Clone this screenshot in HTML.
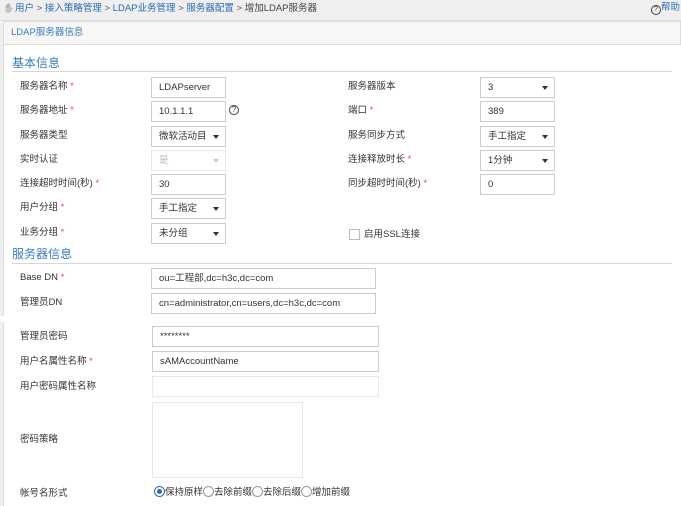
<!DOCTYPE html>
<html><head><meta charset="utf-8"><style>
*{margin:0;padding:0;box-sizing:border-box}
body{width:681px;height:506px;overflow:hidden;background:#fff;font-family:"Liberation Sans","Noto Sans CJK SC",sans-serif;font-size:9.5px;color:#333;position:relative}
.a{position:absolute;white-space:nowrap}
.bc{left:0;top:0;width:681px;height:21px;background:#efefef;border-bottom:1px solid #ddd}
.lb{line-height:14px}
.r{color:#e05050}
.in{position:absolute;height:21px;border:1px solid #ccc;background:#fff;padding-left:7px;line-height:19px;font-size:9.5px;color:#333;overflow:hidden}
.sel{padding-right:12px}
.sel:after{content:"";position:absolute;right:6px;top:8px;border-left:3.5px solid transparent;border-right:3.5px solid transparent;border-top:4px solid #333}
.dis{border-color:#e6e6e6;color:#bbb}
.dis:after{border-top-color:#ccc}
.sec{color:#3a7cc0;font-size:12px;line-height:14px}
.ln{height:1px;background:#d6d6d6}
.rad{display:inline-block;width:11px;height:11px;border:1px solid #999;border-radius:50%;vertical-align:-2px;background:#fff;margin:0}
</style></head><body>
<div class="a bc"></div>
<div class="a" style="left:3px;top:3px;font-size:9px;color:#666;filter:grayscale(1)">✋</div>
<div class="a lb" style="left:15px;top:2px;color:#2a6bb3">用户 <span style="color:#555">&gt;</span> 接入策略管理 <span style="color:#555">&gt;</span> LDAP业务管理 <span style="color:#555">&gt;</span> 服务器配置 <span style="color:#555">&gt;</span> <span style="color:#444">增加LDAP服务器</span></div>
<div class="a lb" style="left:651px;top:1px;color:#2a6bb3"><span style="display:inline-block;width:10px;height:10px;border:1px solid #444;border-radius:50%;font-size:7px;line-height:8px;text-align:center;color:#444;vertical-align:-1px">?</span>帮助</div>
<div class="a" style="left:0;top:22px;width:3px;height:294px;background:#efefef"></div>
<div class="a" style="left:0;top:322px;width:3px;height:184px;background:#efefef"></div>
<div class="a" style="left:3px;top:21px;width:678px;height:24px;background:#f7f7f7;border:1px solid #ddd"></div>
<div class="a" style="left:3px;top:45px;width:1px;height:271px;background:#ddd"></div>
<div class="a" style="left:3px;top:322px;width:1px;height:184px;background:#ddd"></div>
<div class="a lb" style="left:11px;top:26px;color:#3a7cc0;font-size:9.5px">LDAP服务器信息</div>

<div class="a sec" style="left:12px;top:56px">基本信息</div>
<div class="a ln" style="left:12px;top:71px;width:660px"></div>

<div class="a lb" style="left:20px;top:80px">服务器名称 <span class="r">*</span></div>
<div class="in" style="left:151px;top:77px;width:75px">LDAPserver</div>
<div class="a lb" style="left:20px;top:104px">服务器地址 <span class="r">*</span></div>
<div class="in" style="left:151px;top:101px;width:75px">10.1.1.1</div>
<div class="a" style="left:229px;top:105px;width:10px;height:10px;border:1px solid #444;border-radius:50%;font-size:8px;line-height:8px;text-align:center">?</div>
<div class="a lb" style="left:20px;top:129px">服务器类型</div>
<div class="in sel" style="left:151px;top:126px;width:75px">微软活动目录</div>
<div class="a lb" style="left:20px;top:153px">实时认证</div>
<div class="in sel dis" style="left:151px;top:150px;width:75px">是</div>
<div class="a lb" style="left:20px;top:177px">连接超时时间(秒) <span class="r">*</span></div>
<div class="in" style="left:151px;top:174px;width:75px">30</div>
<div class="a lb" style="left:20px;top:201px">用户分组 <span class="r">*</span></div>
<div class="in sel" style="left:151px;top:198px;width:75px">手工指定</div>
<div class="a lb" style="left:20px;top:226px">业务分组 <span class="r">*</span></div>
<div class="in sel" style="left:151px;top:223px;width:75px">未分组</div>

<div class="a lb" style="left:348px;top:80px">服务器版本</div>
<div class="in sel" style="left:480px;top:77px;width:75px">3</div>
<div class="a lb" style="left:348px;top:104px">端口 <span class="r">*</span></div>
<div class="in" style="left:480px;top:101px;width:75px">389</div>
<div class="a lb" style="left:348px;top:129px">服务同步方式</div>
<div class="in sel" style="left:480px;top:126px;width:75px">手工指定</div>
<div class="a lb" style="left:348px;top:153px">连接释放时长 <span class="r">*</span></div>
<div class="in sel" style="left:480px;top:150px;width:75px">1分钟</div>
<div class="a lb" style="left:348px;top:177px">同步超时时间(秒) <span class="r">*</span></div>
<div class="in" style="left:480px;top:174px;width:75px">0</div>
<div class="a" style="left:349px;top:229px;width:11px;height:11px;border:1px solid #bbb;background:#fff"></div>
<div class="a lb" style="left:364px;top:228px">启用SSL连接</div>

<div class="a sec" style="left:12px;top:247px">服务器信息</div>
<div class="a ln" style="left:12px;top:263px;width:660px"></div>

<div class="a lb" style="left:20px;top:271px">Base DN <span class="r">*</span></div>
<div class="in" style="left:151px;top:268px;width:225px">ou=工程部,dc=h3c,dc=com</div>
<div class="a lb" style="left:20px;top:296px">管理员DN</div>
<div class="in" style="left:151px;top:293px;width:225px">cn=administrator,cn=users,dc=h3c,dc=com</div>
<div class="a lb" style="left:20px;top:330px">管理员密码</div>
<div class="in" style="left:152px;top:326px;width:227px">********</div>
<div class="a lb" style="left:20px;top:355px">用户名属性名称 <span class="r">*</span></div>
<div class="in" style="left:152px;top:351px;width:227px">sAMAccountName</div>
<div class="a lb" style="left:20px;top:380px">用户密码属性名称</div>
<div class="in" style="left:152px;top:376px;width:227px;border-color:#e8e8e8"></div>
<div class="in" style="left:152px;top:402px;width:151px;height:76px;border-color:#e6e6e6"></div>
<div class="a lb" style="left:20px;top:433px">密码策略</div>
<div class="a lb" style="left:20px;top:487px">帐号名形式</div>
<div class="a lb" style="left:154px;top:486px"><span class="rad" style="border-color:#2a6bb3;position:relative"><span style="position:absolute;left:2px;top:2px;width:5px;height:5px;border-radius:50%;background:#2a6bb3"></span></span>保持原样<span class="rad"></span>去除前缀<span class="rad"></span>去除后缀<span class="rad"></span>增加前缀</div>
</body></html>
